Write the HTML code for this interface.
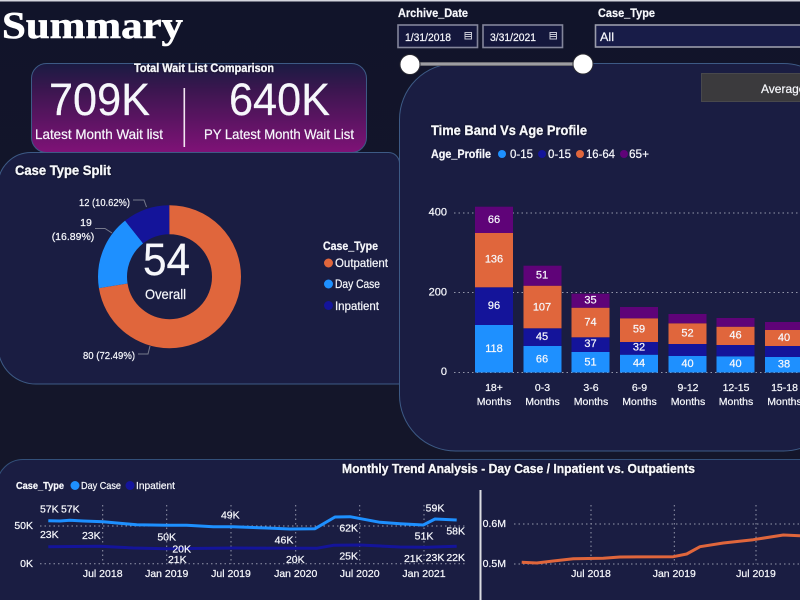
<!DOCTYPE html>
<html lang="en">
<head>
<meta charset="utf-8">
<title>Summary</title>
<style>
html,body{margin:0;padding:0;width:800px;height:600px;overflow:hidden;background:#12152a}
svg{display:block;font-family:"Liberation Sans",Arial,sans-serif;filter:blur(.35px)}
text{fill:#f6f7fb;stroke:#f6f7fb;stroke-width:.22px}
.b{font-weight:bold}
.c{text-anchor:middle;dominant-baseline:central}
.g{stroke:#9497ab;stroke-width:1;stroke-dasharray:1.5 3;fill:none}
.l{font-size:10.5px}
.s{font-size:11px}
</style>
</head>
<body>
<svg width="800" height="600" viewBox="0 0 800 600" xmlns="http://www.w3.org/2000/svg">
<defs>
<linearGradient id="kpi" x1="0" y1="0" x2="0" y2="1">
<stop offset="0" stop-color="#1a1b42"/>
<stop offset="0.3" stop-color="#3c1650"/>
<stop offset="1" stop-color="#7f1277"/>
</linearGradient>
<linearGradient id="bg" x1="0" y1="0" x2="0" y2="1">
<stop offset="0" stop-color="#11142a"/>
<stop offset="1" stop-color="#15172a"/>
</linearGradient>
<linearGradient id="sl" x1="0" y1="0" x2="0" y2="1">
<stop offset="0" stop-color="#55555c"/>
<stop offset=".5" stop-color="#b5b5ba"/>
<stop offset="1" stop-color="#55555c"/>
</linearGradient>
<filter id="sh" x="-10%" y="-20%" width="120%" height="140%"><feDropShadow dx="0" dy="0" stdDeviation="1" flood-color="#000" flood-opacity=".8"/></filter>
</defs>
<rect width="800" height="600" fill="url(#bg)"/>
<rect width="800" height="1.5" fill="#d5d6de"/>

<!-- Title -->
<text x="2" y="38" font-size="38" textLength="181" lengthAdjust="spacingAndGlyphs" style="font-family:'Liberation Serif',serif;font-weight:bold;fill:#fff;stroke:#fff;stroke-width:.6px">Summary</text>

<!-- Right card -->
<rect x="399.5" y="63.5" width="440" height="387.5" rx="56" fill="#1a1d42" stroke="#3d5a85"/>

<!-- KPI card -->
<rect x="31.5" y="63.5" width="335" height="89" rx="15" fill="url(#kpi)" stroke="#3d5a85"/>
<text x="134" y="72" class="b" font-size="11.5" textLength="140" lengthAdjust="spacingAndGlyphs" filter="url(#sh)">Total Wait List Comparison</text>
<text x="49" y="115" font-size="45" textLength="101" lengthAdjust="spacingAndGlyphs">709K</text>
<text x="229" y="115" font-size="45" textLength="101" lengthAdjust="spacingAndGlyphs">640K</text>
<text x="35" y="139" font-size="14" textLength="128" lengthAdjust="spacingAndGlyphs">Latest Month Wait list</text>
<text x="204" y="139" font-size="14" textLength="150" lengthAdjust="spacingAndGlyphs">PY Latest Month Wait List</text>
<rect x="183.5" y="88" width="1.6" height="59" fill="#f3e6f2"/>

<!-- Left card -->
<path d="M-2 185 A33 33 0 0 1 31 152.500 H388 A11 11 0 0 1 399.500 164 V384 H38 A38 38 0 0 1 -2 346 Z" fill="#1a1d42" stroke="#3d5a85"/>

<!-- Filters -->
<text x="398" y="17" class="b" font-size="12" textLength="70" lengthAdjust="spacingAndGlyphs">Archive_Date</text>
<text x="598" y="17" class="b" font-size="12" textLength="57" lengthAdjust="spacingAndGlyphs">Case_Type</text>
<rect x="398" y="25" width="79.500" height="22.500" fill="#14173c" stroke="#83859a" stroke-width="1.600"/>
<rect x="483" y="25" width="79.500" height="22.500" fill="#14173c" stroke="#83859a" stroke-width="1.600"/>
<rect x="595.500" y="25" width="230" height="22" fill="#181c48" stroke="#9a9cab" stroke-width="1.600"/>
<text x="405" y="41" class="s" textLength="46" lengthAdjust="spacingAndGlyphs">1/31/2018</text>
<text x="490" y="41" class="s" textLength="46" lengthAdjust="spacingAndGlyphs">3/31/2021</text>
<text x="600" y="41" font-size="12" textLength="14" lengthAdjust="spacingAndGlyphs">All</text>
<g fill="none" stroke="#c5c6d2" stroke-width="1">
<rect x="465" y="32.500" width="6.500" height="6.500"/><path d="M465 34.500H471.500M465 36.500H471.500"/>
<rect x="550" y="32.500" width="6.500" height="6.500"/><path d="M550 34.500H556.500M550 36.500H556.500"/>
</g>
<rect x="410" y="62" width="173" height="4" fill="url(#sl)"/>
<circle cx="410" cy="64.500" r="10" fill="#fff" stroke="#2b2b33" stroke-width="1"/>
<circle cx="583" cy="64" r="10" fill="#fff" stroke="#2b2b33" stroke-width="1"/>
<rect x="701.500" y="73.500" width="120" height="28" fill="#3b3a3d" stroke="#48484c"/>
<text x="761" y="93" font-size="12">Average</text>

<!-- Stacked chart heading -->
<text x="431" y="135" class="b" font-size="13.500" textLength="156" lengthAdjust="spacingAndGlyphs" filter="url(#sh)">Time Band Vs Age Profile</text>
<text x="431" y="158" class="b" font-size="12" textLength="60" lengthAdjust="spacingAndGlyphs">Age_Profile</text>
<circle cx="502" cy="154" r="4" fill="#1e90ff"/><text x="510" y="158" font-size="12" textLength="23" lengthAdjust="spacingAndGlyphs">0-15</text>
<circle cx="542" cy="154" r="4" fill="#14149a"/><text x="548" y="158" font-size="12" textLength="23" lengthAdjust="spacingAndGlyphs">0-15</text>
<circle cx="580" cy="154" r="4" fill="#e0663c"/><text x="586" y="158" font-size="12" textLength="29" lengthAdjust="spacingAndGlyphs">16-64</text>
<circle cx="624" cy="154" r="4" fill="#5f0378"/><text x="629" y="158" font-size="12" textLength="20" lengthAdjust="spacingAndGlyphs">65+</text>

<!-- Stacked axis -->
<path class="g" d="M454 213H800M454 292.500H800M454 372.500H800"/>
<text x="447" y="212.500" class="s" text-anchor="end" dominant-baseline="central">400</text>
<text x="447" y="292.500" class="s" text-anchor="end" dominant-baseline="central">200</text>
<text x="447" y="372" class="s" text-anchor="end" dominant-baseline="central">0</text>

<!-- Bars -->
<g>
<rect x="475" y="325" width="38" height="47.500" fill="#1e90ff"/><rect x="475" y="287.300" width="38" height="37.700" fill="#14149a"/><rect x="475" y="233" width="38" height="54.300" fill="#e0663c"/><rect x="475" y="206.700" width="38" height="26.300" fill="#5f0378"/>
<rect x="523.500" y="346" width="38" height="26.500" fill="#1e90ff"/><rect x="523.500" y="328.300" width="38" height="17.700" fill="#14149a"/><rect x="523.500" y="285.700" width="38" height="42.600" fill="#e0663c"/><rect x="523.500" y="265.700" width="38" height="20" fill="#5f0378"/>
<rect x="571.500" y="352" width="38" height="20.500" fill="#1e90ff"/><rect x="571.500" y="337.300" width="38" height="14.700" fill="#14149a"/><rect x="571.500" y="307.700" width="38" height="29.600" fill="#e0663c"/><rect x="571.500" y="293.700" width="38" height="14" fill="#5f0378"/>
<rect x="620" y="354.700" width="38" height="17.800" fill="#1e90ff"/><rect x="620" y="342" width="38" height="12.700" fill="#14149a"/><rect x="620" y="318.300" width="38" height="23.700" fill="#e0663c"/><rect x="620" y="307" width="38" height="11.300" fill="#5f0378"/>
<rect x="668.500" y="356" width="38" height="16.500" fill="#1e90ff"/><rect x="668.500" y="344" width="38" height="12" fill="#14149a"/><rect x="668.500" y="323.300" width="38" height="20.700" fill="#e0663c"/><rect x="668.500" y="314" width="38" height="9.300" fill="#5f0378"/>
<rect x="716.500" y="356.300" width="38" height="16.200" fill="#1e90ff"/><rect x="716.500" y="345" width="38" height="11.300" fill="#14149a"/><rect x="716.500" y="326.700" width="38" height="18.300" fill="#e0663c"/><rect x="716.500" y="318" width="38" height="8.700" fill="#5f0378"/>
<rect x="765" y="357" width="38" height="15.500" fill="#1e90ff"/><rect x="765" y="346" width="38" height="11" fill="#14149a"/><rect x="765" y="330" width="38" height="16" fill="#e0663c"/><rect x="765" y="322" width="38" height="8" fill="#5f0378"/>
</g>
<g class="s">
<text x="494" y="220" class="c">66</text><text x="494" y="259.700" class="c">136</text><text x="494" y="306" class="c">96</text><text x="494" y="349" class="c">118</text>
<text x="542" y="275.300" class="c">51</text><text x="542" y="307.300" class="c">107</text><text x="542" y="337" class="c">45</text><text x="542" y="359.300" class="c">66</text>
<text x="590.500" y="300.300" class="c">35</text><text x="590.500" y="322.300" class="c">74</text><text x="590.500" y="344" class="c">37</text><text x="590.500" y="362.700" class="c">51</text>
<text x="639" y="329.300" class="c">59</text><text x="639" y="347.700" class="c">32</text><text x="639" y="363.300" class="c">44</text>
<text x="687.500" y="333.300" class="c">52</text><text x="687.500" y="364" class="c">40</text>
<text x="735.500" y="335.300" class="c">46</text><text x="735.500" y="364" class="c">40</text>
<text x="784" y="338" class="c">40</text><text x="784" y="364.300" class="c">38</text>
</g>
<g class="l">
<text x="494" y="388" class="c">18+</text><text x="494" y="402" class="c">Months</text>
<text x="542.500" y="388" class="c">0-3</text><text x="542.500" y="402" class="c">Months</text>
<text x="591" y="388" class="c">3-6</text><text x="591" y="402" class="c">Months</text>
<text x="639.500" y="388" class="c">6-9</text><text x="639.500" y="402" class="c">Months</text>
<text x="688" y="388" class="c">9-12</text><text x="688" y="402" class="c">Months</text>
<text x="736" y="388" class="c">12-15</text><text x="736" y="402" class="c">Months</text>
<text x="784.500" y="388" class="c">15-18</text><text x="784.500" y="402" class="c">Months</text>
</g>

<!-- Donut -->
<text x="15" y="175" class="b" font-size="13.500" textLength="96" lengthAdjust="spacingAndGlyphs" filter="url(#sh)">Case Type Split</text>
<g fill="none" stroke-width="29" transform="rotate(-90 169.500 276.700)">
<circle cx="169.500" cy="276.700" r="57" pathLength="100" stroke="#e0663c" stroke-dasharray="72.490 27.510" stroke-dashoffset="0"/>
<circle cx="169.500" cy="276.700" r="57" pathLength="100" stroke="#1e90ff" stroke-dasharray="16.890 83.110" stroke-dashoffset="-72.490"/>
<circle cx="169.500" cy="276.700" r="57" pathLength="100" stroke="#14149a" stroke-dasharray="10.620 89.380" stroke-dashoffset="-89.380"/>
</g>
<text x="143" y="275" font-size="45" textLength="47" lengthAdjust="spacingAndGlyphs">54</text>
<text x="145" y="299" font-size="14" textLength="41" lengthAdjust="spacingAndGlyphs">Overall</text>
<g fill="none" stroke="#777a8c" stroke-width="1">
<path d="M133 200H144L146.500 207"/><path d="M95 228.500H105L112 233"/><path d="M138 354H148L150 346"/>
</g>
<text x="79" y="206" class="l" textLength="51" lengthAdjust="spacingAndGlyphs">12 (10.62%)</text>
<text x="86" y="223" class="l c">19</text>
<text x="73" y="237" class="l c">(16.89%)</text>
<text x="83" y="359" class="l" textLength="52" lengthAdjust="spacingAndGlyphs">80 (72.49%)</text>
<text x="323" y="250" class="b" font-size="12" textLength="55" lengthAdjust="spacingAndGlyphs">Case_Type</text>
<circle cx="328.500" cy="263" r="4.500" fill="#e0663c"/><text x="335" y="267" font-size="12" textLength="53" lengthAdjust="spacingAndGlyphs">Outpatient</text>
<circle cx="328.500" cy="284" r="4.500" fill="#1e90ff"/><text x="335" y="288" font-size="12" textLength="45" lengthAdjust="spacingAndGlyphs">Day Case</text>
<circle cx="328.500" cy="305.500" r="4.500" fill="#14149a"/><text x="335" y="310" font-size="12" textLength="44" lengthAdjust="spacingAndGlyphs">Inpatient</text>

<!-- Bottom card -->
<rect x="-3" y="459.500" width="840" height="170" rx="26" fill="#1a1d42" stroke="#33507a"/>
<text x="342" y="473" class="b" font-size="13" textLength="353" lengthAdjust="spacingAndGlyphs" filter="url(#sh)">Monthly Trend Analysis - Day Case / Inpatient vs. Outpatients</text>
<text x="16" y="489" class="b" font-size="10.500" textLength="48" lengthAdjust="spacingAndGlyphs">Case_Type</text>
<circle cx="75" cy="485.500" r="4.500" fill="#1e90ff"/><text x="81" y="489" class="l" textLength="40" lengthAdjust="spacingAndGlyphs">Day Case</text>
<circle cx="130" cy="485.500" r="4.500" fill="#14149a"/><text x="136" y="489" class="l" textLength="39" lengthAdjust="spacingAndGlyphs">Inpatient</text>

<path class="g" d="M40 526H465M40 563.700H465M102.700 505V564M166.700 505V564M231 505V564M295.700 505V564M359.700 505V564M424 505V564"/>
<text x="33" y="526" class="l" text-anchor="end" dominant-baseline="central">50K</text>
<text x="33" y="564" class="l" text-anchor="end" dominant-baseline="central">0K</text>
<path fill="none" stroke="#1e90ff" stroke-width="3" stroke-linejoin="round" d="M48.300 520.700L60 521L70 520.300L83.300 521L103.300 521.700L116.700 523L136.700 524.700L166.700 525.300L186.700 525.300L213.300 526.700L233.300 526.700L266.700 528L290 529L315 528.700L335 517L350 516.700L380 522.300L400 523.700L423.300 525L435 519L456.700 520"/>
<path fill="none" stroke="#14149a" stroke-width="3" stroke-linejoin="round" d="M48.300 546.700L100 546.300L133.300 548L166.700 548.700L233.300 548L316.700 548.300L333.300 545.300L360 545L400 547L426.700 547.300L456.700 546.300"/>
<g class="l">
<text x="49.300" y="509.700" class="c">57K</text><text x="70.300" y="509.700" class="c">57K</text><text x="230.300" y="515.700" class="c">49K</text><text x="435" y="508.300" class="c">59K</text>
<text x="49.300" y="535" class="c">23K</text><text x="91.300" y="536" class="c">23K</text><text x="166.700" y="537.700" class="c">50K</text><text x="348.700" y="528.300" class="c">62K</text>
<text x="424" y="536.700" class="c">51K</text><text x="455.700" y="531.700" class="c">58K</text><text x="284" y="540.300" class="c">46K</text><text x="181.700" y="549.300" class="c">20K</text>
<text x="177.300" y="560" class="c">21K</text><text x="295.300" y="560" class="c">20K</text><text x="348.700" y="556.700" class="c">25K</text><text x="413.300" y="559" class="c">21K</text>
<text x="435" y="558" class="c">23K</text><text x="455.700" y="558" class="c">22K</text>
<text x="102.700" y="574" class="c">Jul 2018</text><text x="166.700" y="574" class="c">Jan 2019</text><text x="231" y="574" class="c">Jul 2019</text><text x="295.700" y="574" class="c">Jan 2020</text><text x="359.700" y="574" class="c">Jul 2020</text><text x="424" y="574" class="c">Jan 2021</text>
</g>

<rect x="479.500" y="490" width="2" height="110" fill="#dcdde2"/>
<path class="g" d="M514 524H800M514 564H800M591 505V564M674.300 505V564M756 505V564"/>
<text x="506" y="524" class="l" text-anchor="end" dominant-baseline="central">0.6M</text>
<text x="506" y="564" class="l" text-anchor="end" dominant-baseline="central">0.5M</text>
<path fill="none" stroke="#e0663c" stroke-width="3" stroke-linejoin="round" d="M521.700 562.300L536.700 563L553.300 561L573.300 558.700L603.300 558.300L620 557L673.300 556.700L686.700 554L700 546.700L723.300 543L753.300 539.700L783.300 535L800 535.700"/>
<g class="l">
<text x="591" y="574" class="c">Jul 2018</text><text x="674.300" y="574" class="c">Jan 2019</text><text x="756" y="574" class="c">Jul 2019</text>
</g>
</svg>
</body>
</html>
